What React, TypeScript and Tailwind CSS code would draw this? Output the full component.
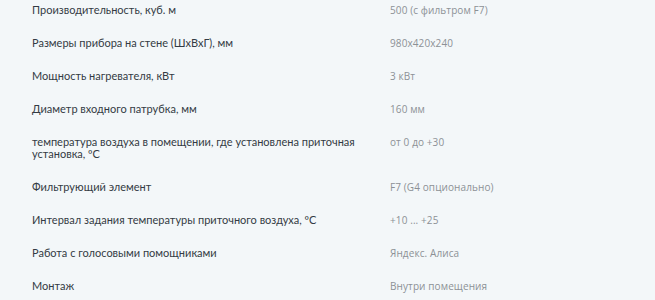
import React from "react";

type Row = { label: string; value: string };

const rows: Row[] = [
  { label: "Производительность, куб. м", value: "500 (с фильтром F7)" },
  { label: "Размеры прибора на стене (ШхВхГ), мм", value: "980x420x240" },
  { label: "Мощность нагревателя, кВт", value: "3 кВт" },
  { label: "Диаметр входного патрубка, мм", value: "160 мм" },
  {
    label: "температура воздуха в помещении, где установлена приточная установка, ºC",
    value: "от 0 до +30",
  },
  { label: "Фильтрующий элемент", value: "F7 (G4 опционально)" },
  { label: "Интервал задания температуры приточного воздуха, ºC", value: "+10 ... +25" },
  { label: "Работа с голосовыми помощниками", value: "Яндекс. Алиса" },
  { label: "Монтаж", value: "Внутри помещения" },
];

export default function App() {
  return (
    <div className="w-[655px] h-[300px] overflow-hidden bg-[#f3f7f9]">
      <div className="flex flex-col gap-[21px] pt-[4px] pl-[32px]">
        {rows.map((r, i) => (
          <div key={i} className="flex items-start">
            <div
              className="w-[336px] shrink-0 text-[11px] leading-[12px] text-[#333b44]"
              style={{ fontFamily: "Lato, 'Noto Sans', sans-serif" }}
            >
              {r.label}
            </div>
            <div
              className="ml-[22px] text-[10px] leading-[12px] text-[#8c9196] tracking-[0.1px]"
              style={{ fontFamily: "'Open Sans', 'Noto Sans', sans-serif" }}
            >
              {r.value}
            </div>
          </div>
        ))}
      </div>
    </div>
  );
}
